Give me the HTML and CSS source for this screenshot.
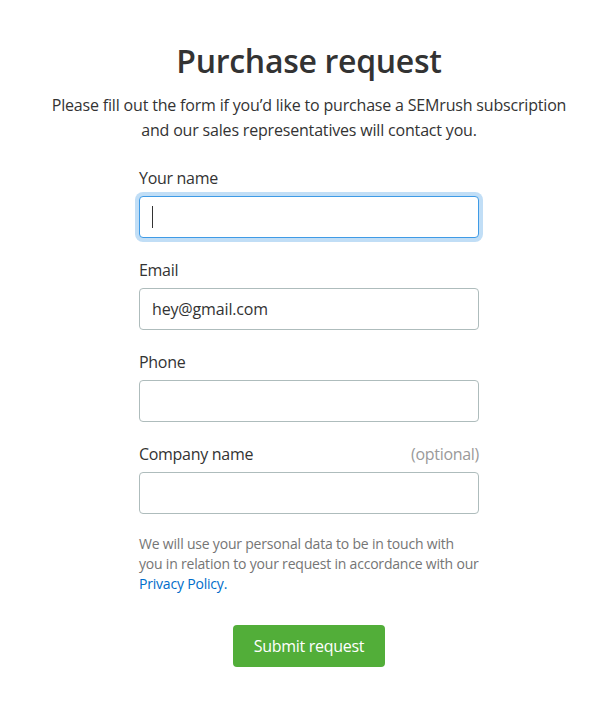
FILE: index.html
```html
<!DOCTYPE html>
<html lang="en">
<head>
<meta charset="utf-8">
<title>Purchase request</title>
<link rel="stylesheet" href="styles.css">
</head>
<body>
<main class="page">
  <h1 class="title">Purchase request</h1>
  <p class="lead">Please fill out the form if you’d like to purchase a SEMrush subscription<br>and our sales representatives will contact you.</p>
  <form class="form">
    <div class="field">
      <div class="label-row"><span class="label">Your name</span></div>
      <div class="input input-focus"><span class="caret"></span></div>
    </div>
    <div class="field">
      <div class="label-row"><span class="label">Email</span></div>
      <div class="input"><span class="value">hey@gmail.com</span></div>
    </div>
    <div class="field">
      <div class="label-row"><span class="label">Phone</span></div>
      <div class="input"></div>
    </div>
    <div class="field">
      <div class="label-row"><span class="label">Company name</span><span class="optional">(optional)</span></div>
      <div class="input"></div>
    </div>
    <p class="note">We will use your personal data to be in touch with<br>you in relation to your request in accordance with our<br><a class="link" href="#">Privacy Policy.</a></p>
    <div class="actions"><button class="submit" type="button">Submit request</button></div>
  </form>
</main>
</body>
</html>
```
FILE: styles.css
```css
html, body {
  margin: 0;
  padding: 0;
  background: #ffffff;
}
body {
  font-family: "Open Sans", "Noto Sans", sans-serif;
  color: #333333;
}
.page {
  display: flex;
  flex-direction: column;
  align-items: center;
  padding: 41px 0 0 19px;
}
.title {
  margin: 0;
  font-size: 32px;
  line-height: 40px;
  font-weight: 600;
  color: #333333;
  letter-spacing: -0.3px;
}
.lead {
  margin: 12px 0 0;
  font-size: 16px;
  line-height: 25px;
  letter-spacing: -0.18px;
  text-align: center;
  color: #333333;
}
.form {
  width: 340px;
  margin-top: 23px;
  display: flex;
  flex-direction: column;
  gap: 20px;
}
.field {
  display: flex;
  flex-direction: column;
  gap: 6px;
}
.label-row {
  display: flex;
  justify-content: space-between;
  font-size: 16px;
  line-height: 24px;
  letter-spacing: -0.3px;
}
.label { color: #333333; }
.optional { color: #9a9a9a; }
.input {
  box-sizing: border-box;
  height: 42px;
  border: 1px solid #aebcbc;
  border-radius: 4px;
  padding: 0 12px;
  display: flex;
  align-items: center;
  font-size: 16px;
  letter-spacing: -0.15px;
  color: #333333;
  background: #fff;
}
.input-focus {
  border-color: #3f9be6;
  box-shadow: 0 0 0 4px #c1def6;
}
.caret {
  width: 1px;
  height: 22px;
  background: #333333;
}
.note {
  margin: 0;
  font-size: 14px;
  line-height: 20px;
  letter-spacing: -0.2px;
  color: #757575;
}
.link {
  color: #006dca;
  text-decoration: none;
}
.actions {
  display: flex;
  justify-content: center;
  margin-top: 11px;
}
.submit {
  height: 42px;
  width: 152px;
  border: 0;
  border-radius: 4px;
  background: #52ae39;
  color: #ffffff;
  font-family: inherit;
  font-size: 16px;
  letter-spacing: -0.3px;
  cursor: pointer;
}
```
